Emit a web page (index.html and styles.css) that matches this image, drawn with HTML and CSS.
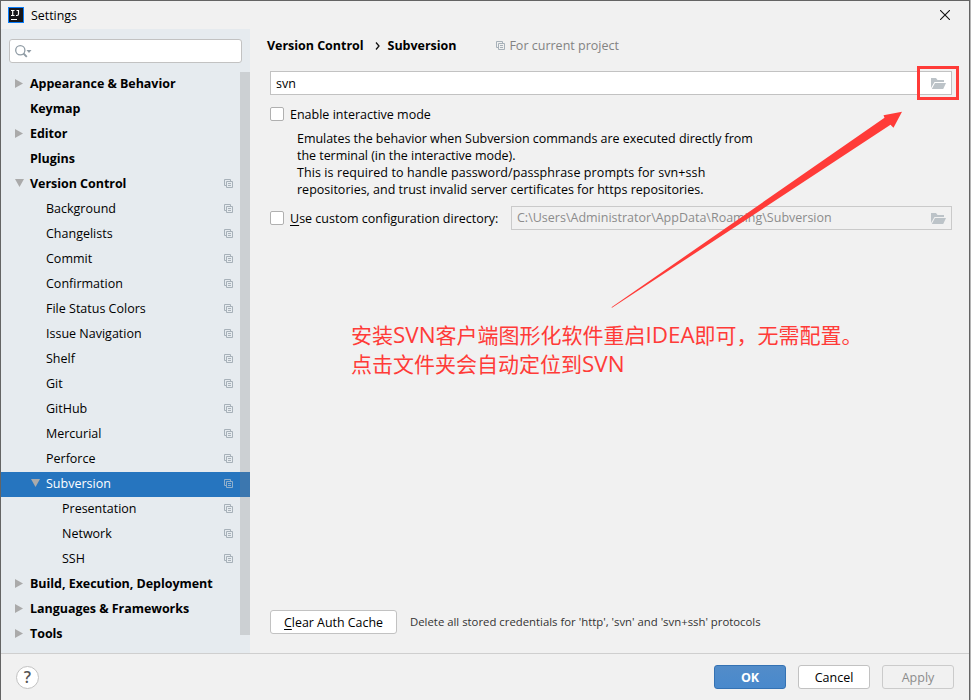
FILE: index.html
```
<!DOCTYPE html>
<html lang="en">
<head>
<meta charset="utf-8">
<title>Settings</title>
<link rel="stylesheet" href="styles.css">
</head>
<body>
<svg class="defs" width="0" height="0">
  <symbol id="copy" viewBox="0 0 9 9"><path d="M2 6.5H.5V.5h6V2M2.500 2.500h6v6h-6zM4 4.500h3M4 6.500h3" fill="none" stroke="currentColor"/></symbol>
  <symbol id="folder" viewBox="0 0 15 11"><path d="M0 10V0h5l1.500 2H13v2H3.500L0 10z"/><path d="M4 5h11l-2.800 6H.8z"/></symbol>
</svg>
<div class="window">
  <header class="titlebar">
    <svg class="logo" viewBox="0 0 16 16"><rect width="16" height="16" fill="#087cfa"/><rect x="1" y="1" width="14" height="14" fill="#17171b"/><path d="M3 3.500h3.500M4.700 3v5.500M3 8.500h3.500M8.500 3.500h2.500M10.500 3v4q0 1.500-1.500 1.500H8" stroke="#fff" stroke-width="1.200" fill="none"/><path d="M3 12.500h6" stroke="#fff"/></svg>
    <span class="title">Settings</span>
    <svg class="close" viewBox="0 0 10 10"><path d="M0 0l10 10M10 0L0 10" stroke="#111" stroke-width="1.100"/></svg>
  </header>
  <div class="body">
    <aside class="sidebar">
      <div class="search">
        <svg width="17" height="13" viewBox="0 0 17 13"><circle cx="5.300" cy="5.300" r="4.600" fill="none" stroke="#8f9ba4" stroke-width="1.300"/><path d="M8.500 8.500l3.300 3.300" stroke="#8f9ba4" stroke-width="1.800"/><path d="M11.500 5h5L14 8z" fill="#8f9ba4"/></svg>
      </div>
      <div class="tree-wrap">
        <ul class="tree">
          <li class="top closed">Appearance &amp; Behavior</li>
          <li class="top">Keymap</li>
          <li class="top closed">Editor</li>
          <li class="top">Plugins</li>
          <li class="top open">Version Control<svg class="copy"><use href="#copy"/></svg></li>
          <li class="sub">Background<svg class="copy"><use href="#copy"/></svg></li>
          <li class="sub">Changelists<svg class="copy"><use href="#copy"/></svg></li>
          <li class="sub">Commit<svg class="copy"><use href="#copy"/></svg></li>
          <li class="sub">Confirmation<svg class="copy"><use href="#copy"/></svg></li>
          <li class="sub">File Status Colors<svg class="copy"><use href="#copy"/></svg></li>
          <li class="sub">Issue Navigation<svg class="copy"><use href="#copy"/></svg></li>
          <li class="sub">Shelf<svg class="copy"><use href="#copy"/></svg></li>
          <li class="sub">Git<svg class="copy"><use href="#copy"/></svg></li>
          <li class="sub">GitHub<svg class="copy"><use href="#copy"/></svg></li>
          <li class="sub">Mercurial<svg class="copy"><use href="#copy"/></svg></li>
          <li class="sub">Perforce<svg class="copy"><use href="#copy"/></svg></li>
          <li class="sub open selected">Subversion<svg class="copy"><use href="#copy"/></svg></li>
          <li class="leaf">Presentation<svg class="copy"><use href="#copy"/></svg></li>
          <li class="leaf">Network<svg class="copy"><use href="#copy"/></svg></li>
          <li class="leaf">SSH<svg class="copy"><use href="#copy"/></svg></li>
          <li class="top closed">Build, Execution, Deployment</li>
          <li class="top closed">Languages &amp; Frameworks</li>
          <li class="top closed">Tools</li>
        </ul>
        <div class="scrollbar"></div>
      </div>
    </aside>
    <main class="content">
      <div class="crumbs">
        <b>Version Control</b>
        <svg class="chevron" viewBox="0 0 5 8"><path d="M1 .5L4 4 1 7.500" fill="none" stroke="#111" stroke-width="1.300"/></svg>
        <b>Subversion</b>
        <span class="scope"><svg class="copy"><use href="#copy"/></svg>For current project</span>
      </div>
      <div class="field"><span>svn</span><svg class="folder"><use href="#folder"/></svg></div>
      <label class="check first"><i class="box"></i>Enable interactive mode</label>
      <p class="hint"><span class="tight">Emulates the behavior when Subversion commands are executed directly from</span><br><span class="tight">the terminal (in the interactive mode).</span><br><span class="loose">This is required to handle password/passphrase prompts for svn+ssh</span><br>repositories, and trust invalid server certificates for https repositories.</p>
      <div class="config">
        <label class="check"><i class="box"></i><span class="cfg"><u>U</u>se custom configuration directory:</span></label>
        <div class="field disabled"><span>C:\Users\Administrator\AppData\Roaming\Subversion</span><svg class="folder"><use href="#folder"/></svg></div>
      </div>
      <div class="auth">
        <button class="btn wide"><span><u>C</u>lear Auth Cache</span></button>
        <span class="note">Delete all stored credentials for 'http', 'svn' and 'svn+ssh' protocols</span>
      </div>
    </main>
  </div>
  <footer class="footer">
    <span class="help">?</span>
    <button class="btn primary">OK</button>
    <button class="btn">Cancel</button>
    <button class="btn off">Apply</button>
  </footer>
</div>
<div class="mark"></div>
<svg class="arrow" viewBox="0 0 300 200"><path d="M1.500 197L274.500 7.500 273.500 5 292 1.500 283.500 17.500 280.500 14.500 2 197.500z" transform="translate(10 .3)" fill="#ff3b38"/></svg>
<p class="callout" lang="zh">安装<span class="latin">SVN</span>客户端图形化软件重启<span class="latin">IDEA</span>即可，无需配置。<br>点击文件夹会自动定位到<span class="latin">SVN</span></p>
</body>
</html>
```
FILE: styles.css
```
* { box-sizing: border-box; }
body { margin: 0; width: 971px; height: 700px; overflow: hidden; position: relative; background: #b5b5b5; color: #000; font: 12.5px/17px "Open Sans", "Noto Sans CJK SC", sans-serif; }
.defs { position: absolute; }
.window { width: 970px; height: 700px; border: 1px solid #646464; border-bottom: 0; background: #f1f1f1; display: flex; flex-direction: column; }
.titlebar { height: 28px; display: flex; align-items: center; padding: 0 19px 0 7px; flex: none; }
.logo { width: 16px; height: 16px; }
.title { margin-left: 7px; flex: 1; font-size: 12.4px; padding-top: 1px; }
.close { width: 10px; height: 10px; }
.body { height: 624px; display: flex; flex: none; }
.sidebar { width: 249px; background: #e6ebef; padding-top: 10px; display: flex; flex-direction: column; flex: none; }
.search { width: 233px; height: 24px; margin: 0 0 9px 8px; background: #fff; border: 1px solid #c2c2c2; border-radius: 3px; padding: 5px; flex: none; }
.search svg { display: block; }
.tree-wrap { display: flex; position: relative; }
.tree { list-style: none; margin: 0; padding: 0; width: 249px; }
.tree li { height: 25px; display: flex; align-items: center; padding-right: 17px; padding-bottom: 2px; }
.tree li::before { content: ""; flex: none; width: 9px; height: 9px; margin-right: 6px; }
.tree .top { font-weight: 700; padding-left: 14px; letter-spacing: -.04px; }
.tree .sub { padding-left: 30px; }
.tree .leaf { padding-left: 46px; }
.tree .closed::before { background: #aaa; clip-path: polygon(0 0, 8px 4.5px, 0 9px); }
.tree .open::before { background: #aaa; clip-path: polygon(0 0, 9px 0, 4.5px 8px); }
.tree .selected { background: #2675bf; color: #fff; }
.copy { width: 9px; height: 9px; color: #a7b1b9; margin-left: auto; flex: none; }
.selected .copy { color: #91b0cc; }
.scrollbar { position: absolute; right: 0; top: 0; width: 10px; height: 563px; background: rgba(128, 128, 128, .25); }
.content { width: 719px; flex: none; padding: 8px 18px 0 20px; display: flex; flex-direction: column; }
.crumbs { display: flex; align-items: center; height: 17px; margin-left: -3px; flex: none; }
.crumbs b { letter-spacing: -.03px; }
.chevron { width: 5px; height: 8px; margin: 0 8px 0 11px; }
.scope { display: flex; align-items: center; color: #838383; margin-left: 40px; }
.scope .copy { margin-right: 4px; }
.field { height: 24px; border: 1px solid #c2c2c2; background: #fff; display: flex; align-items: center; justify-content: space-between; padding: 0 5px; margin-top: 17px; flex: none; width: 682px; }
.folder { width: 15px; height: 11px; fill: #bcc3c8; margin-top: 1px; }
.check { display: flex; align-items: center; height: 17px; flex: none; }
.first { margin-top: 11px; }
.box { width: 14px; height: 14px; border: 1px solid #b0b0b0; border-radius: 2px; background: #fff; margin-right: 6px; margin-top: -1px; flex: none; }
.hint { margin: 7px 0 0 27px; flex: none; white-space: nowrap; }
.tight { letter-spacing: -.04px; }
.loose { letter-spacing: .09px; }
.config { display: flex; align-items: center; justify-content: space-between; margin-top: 8px; width: 682px; flex: none; }
.config .field { margin: 0; width: 441px; }
.field.disabled { background: #f1f1f1; border-color: #cacaca; color: #8c8c8c; }
.disabled span { margin-top: -1px; }
u { text-decoration-thickness: 1px; text-underline-offset: 2px; }
.auth { display: flex; align-items: center; margin-top: 380px; flex: none; }
.note { font-size: 11.35px; color: #333; margin: -2px 0 0 13px; white-space: nowrap; }
.btn { width: 72px; height: 24px; padding: 0; border: 1px solid #c2c2c2; border-radius: 3px; background: #fff; color: #000; font: inherit; flex: none; }
.btn.wide { width: 127px; font-size: 12.4px; }
.btn.primary { background: linear-gradient(#528cc9, #4989cc); border-color: #3472b3; color: #fff; font-weight: 700; }
.btn.off { background: #f1f1f1; border-color: #cbcbcb; color: #8c8c8c; }
.footer { flex: 1; border-top: 1px solid #cfcfcf; display: flex; align-items: center; gap: 12px; padding: 0 15px; }
.help { width: 23px; height: 23px; border: 1px solid #c2c2c2; border-radius: 50%; background: #fff; color: #555; font: 600 16px/21px "Open Sans", sans-serif; text-align: center; margin-right: auto; }
.mark { position: absolute; left: 917px; top: 66px; width: 42px; height: 34px; border: 3px solid #ff3b38; }
.arrow { position: absolute; left: 600px; top: 110px; width: 300px; height: 200px; overflow: visible; }
.callout { position: absolute; left: 351px; top: 320px; margin: 0; color: #ff3b38; font: 21px/29px "Noto Sans CJK SC", sans-serif; white-space: nowrap; }
.latin { font: 22.4px/20px "Open Sans", sans-serif; }
```
